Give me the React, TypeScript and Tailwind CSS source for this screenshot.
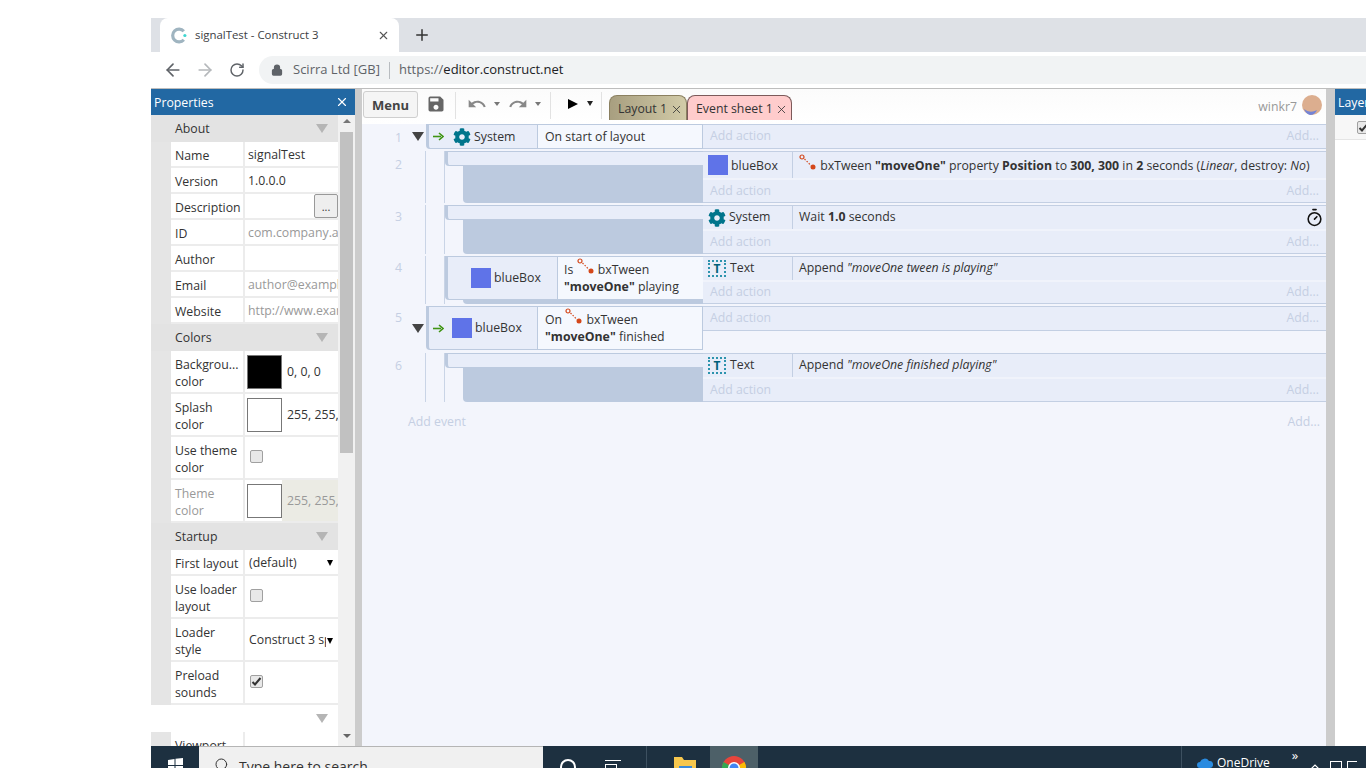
import { ReactNode } from 'react';
import { ArrowLeft, ArrowRight, Lock, RotateCw, Plus, X, Timer, Search } from 'lucide-react';
import { FaCog } from 'react-icons/fa';
import { MdSave, MdUndo, MdRedo } from 'react-icons/md';

const font = "font-['Open_Sans','Noto_Sans',sans-serif]";

function Check({ checked }: { checked?: boolean }) {
  return (
    <span className="w-[13px] h-[13px] rounded-[2px] border border-[#a0a0a0] bg-[#e8e8e8] flex items-center justify-center">
      {checked && (
        <svg width="11" height="11" viewBox="0 0 11 11">
          <path d="M1.5 6 L4 8.5 L9.5 2" fill="none" stroke="#333" strokeWidth="2" />
        </svg>
      )}
    </span>
  );
}

function Section({ label, blank }: { label?: string; blank?: boolean }) {
  return (
    <div className={`flex items-center justify-between h-[27px] pl-[24px] pr-[8px] text-[12.3px] text-[#333] ${blank ? 'bg-white' : 'bg-[#e3e3e3]'}`}>
      <span className="pt-[2px]">{label}</span>
      <span className="w-0 h-0 border-l-[6px] border-r-[6px] border-t-[9px] border-l-transparent border-r-transparent border-t-[#b5b5b5] mr-[2px]" />
    </div>
  );
}

function Row({ label, children, tall, muted, shaded }: { label: ReactNode; children?: ReactNode; tall?: boolean; muted?: boolean; shaded?: boolean }) {
  return (
    <div className={`flex bg-[#e5e5e5] ${tall ? 'h-[43px]' : 'h-[26px]'}`}>
      <div className="w-[20px] shrink-0" />
      <div className={`w-[74px] shrink-0 bg-white border-b-2 border-r-2 border-[#ececec] pl-[4px] pt-[2px] text-[12.3px] leading-[17px] flex items-center ${muted ? 'text-[#999]' : 'text-[#333]'}`}>
        <span>{label}</span>
      </div>
      <div className={`flex-1 min-w-0 overflow-hidden whitespace-nowrap bg-white border-b-2 border-[#ececec] flex items-center text-[12.3px] ${shaded ? 'text-[#999]' : 'text-[#333]'}`}>
        {children}
      </div>
    </div>
  );
}

function Value({ children }: { children: ReactNode }) {
  return <span className="pl-[3px] pt-[2px]">{children}</span>;
}

function Swatch({ color, value, shaded }: { color: string; value: string; shaded?: boolean }) {
  return (
    <div className="flex items-center h-full w-full">
      <span className={`w-[35px] h-[34px] ml-[2px] border border-[#777] shrink-0 ${color}`} />
      <span className={`flex items-center h-full flex-1 pl-[5px] pt-[2px] ${shaded ? 'bg-[#ebebe4]' : ''}`}>{value}</span>
    </div>
  );
}

function Select({ value }: { value: string }) {
  return (
    <div className="flex items-center justify-between w-full pl-[4px] pr-[5px] pt-[2px]">
      <span className="overflow-hidden">{value}</span>
      <span className="w-0 h-0 ml-[1px] border-l-[3px] border-r-[3px] border-t-[6px] border-l-transparent border-r-transparent border-t-black shrink-0" />
    </div>
  );
}

function CheckCell({ checked }: { checked?: boolean }) {
  return <span className="pl-[5px] -mt-[2px] flex"><Check checked={checked} /></span>;
}

function PropertiesPanel() {
  return (
    <div className="w-[204px] shrink-0 flex flex-col overflow-hidden bg-white">
      <div className="h-[26px] bg-[#2268a3] text-white text-[12.3px] flex items-center justify-between pl-[3px] pr-[6px] shrink-0">
        <span className="pt-[2px]">Properties</span>
        <X size={14} strokeWidth={2} />
      </div>
      <div className="flex flex-1 min-h-0">
        <div className="w-[187px] shrink-0">
          <div className="bg-[#e5e5e5]"><Section label="About" /></div>
          <Row label="Name"><Value>signalTest</Value></Row>
          <Row label="Version"><Value>1.0.0.0</Value></Row>
          <Row label="Description">
            <div className="flex justify-end w-full">
              <span className="w-[24px] h-[24px] border border-[#999] rounded-[2px] bg-[#eeeeee] flex items-center justify-center text-[11px] leading-none">...</span>
            </div>
          </Row>
          <Row label="ID" shaded><Value>com.company.app</Value></Row>
          <Row label="Author" />
          <Row label="Email" shaded><Value>author@example.com</Value></Row>
          <Row label="Website" shaded><Value>http://www.example.com</Value></Row>
          <div className="bg-[#e5e5e5]"><Section label="Colors" /></div>
          <Row tall label={<>Backgrou...<br />color</>}><Swatch color="bg-black" value="0, 0, 0" /></Row>
          <Row tall label={<>Splash<br />color</>}><Swatch color="bg-white" value="255, 255, 255" /></Row>
          <Row tall label={<>Use theme<br />color</>}><CheckCell /></Row>
          <Row tall muted shaded label={<>Theme<br />color</>}><Swatch shaded color="bg-white" value="255, 255, 255" /></Row>
          <div className="bg-[#e5e5e5]"><Section label="Startup" /></div>
          <Row label="First layout"><Select value="(default)" /></Row>
          <Row tall label={<>Use loader<br />layout</>}><CheckCell /></Row>
          <Row tall label={<>Loader<br />style</>}><Select value="Construct 3 spinner" /></Row>
          <Row tall label={<>Preload<br />sounds</>}><CheckCell checked /></Row>
          <Section blank />
          <Row label="Viewport" />
        </div>
        <div className="w-[17px] bg-[#f1f1f1] flex flex-col items-center">
          <span className="mt-[4px] w-0 h-0 border-l-[4px] border-r-[4px] border-b-[4px] border-l-transparent border-r-transparent border-b-[#777]" />
          <span className="mt-[9px] w-[13px] h-[321px] bg-[#c1c1c1]" />
          <span className="mt-[281px] w-0 h-0 border-l-[4px] border-r-[4px] border-t-[4px] border-l-transparent border-r-transparent border-t-[#666]" />
        </div>
      </div>
    </div>
  );
}

function TweenIcon() {
  return (
    <svg width="18" height="16" viewBox="0 0 18 16" className="inline-block align-baseline -mt-[4px]">
      <circle cx="3" cy="3" r="2" fill="none" stroke="#d4471a" strokeWidth="1.2" />
      <path d="M5.5 5 L12 11.5" stroke="#d4471a" strokeWidth="1.2" strokeDasharray="1.5 1.5" />
      <circle cx="14" cy="13" r="2.5" fill="#d4471a" />
    </svg>
  );
}

function Blue() {
  return <span className="w-[20px] h-[20px] bg-[#5f73e8] shrink-0" />;
}

function Gear({ size = 18 }: { size?: number }) {
  return <FaCog size={size} color="#00758c" className="shrink-0" />;
}

function TextIcon() {
  return (
    <span className="w-[18px] h-[17px] border-2 border-dotted border-[#2c93ad] flex items-center justify-center shrink-0 mr-[1px]">
      <span className="text-[#00617a] font-bold text-[12px] leading-none">T</span>
    </span>
  );
}

function GreenArrow() {
  return (
    <svg width="11" height="9" viewBox="0 0 11 9" className="shrink-0">
      <path d="M0 4.5 H8" stroke="#3f9413" strokeWidth="1.6" />
      <path d="M6 1 L10 4.5 L6 8" fill="none" stroke="#3f9413" strokeWidth="1.6" />
    </svg>
  );
}

function Action({ icon, name, children, extra, tall }: { icon: ReactNode; name: string; children: ReactNode; extra?: ReactNode; tall?: boolean }) {
  return (
    <div className={`flex items-center shrink-0 border-b-2 border-[#f0f3fb] ${tall ? 'h-[28px]' : 'h-[25px]'}`}>
      <div className="w-[90px] h-full shrink-0 flex items-center gap-[3px] pl-[5px] border-r border-[#c3cfe3] text-[#333]">
        {icon}
        <span className={tall ? 'pt-[3px]' : ''}>{name}</span>
      </div>
      <div className={`flex-1 pl-[6px] whitespace-nowrap text-[#333] ${tall ? 'pt-[3px]' : ''}`}>{children}</div>
      {extra}
    </div>
  );
}

function AddAction() {
  return (
    <div className="flex items-center justify-between flex-1 px-[7px] text-[#c5cfe3]">
      <span>Add action</span>
      <span>Add...</span>
    </div>
  );
}

function ActionsColumn({ children, h }: { children?: ReactNode; h?: string }) {
  return (
    <div className={`w-[623px] shrink-0 flex flex-col bg-[#e8edf9] border-y border-[#c3cfe3] ${h ?? 'h-full'}`}>
      {children}
    </div>
  );
}

function EventNumber({ n, toggle, top, toggleTop }: { n: number; toggle?: boolean; top: string; toggleTop?: string }) {
  return (
    <div className="w-[64px] shrink-0 h-full relative text-[#c5cfe3]">
      <span className={`absolute left-[33px] ${top}`}>{n}</span>
      {toggle && (
        <span className={`absolute left-[50px] w-0 h-0 border-l-[6px] border-r-[6px] border-t-[9px] border-l-transparent border-r-transparent border-t-[#444] ${toggleTop}`} />
      )}
    </div>
  );
}

function TopEvent({ n, h, top, toggleTop, object, children, actionsH, actions }: { n: number; h: string; top: string; toggleTop: string; object: ReactNode; children: ReactNode; actionsH?: string; actions: ReactNode }) {
  return (
    <div className={`flex ${h}`}>
      <EventNumber n={n} toggle top={top} toggleTop={toggleTop} />
      <div className="w-[277px] shrink-0 h-full flex bg-[#e8edf9] border border-l-[3px] border-[#bccadf] rounded-bl-[4px]">
        <div className="w-[109px] shrink-0 flex items-center border-r border-[#bccadf] text-[#333]">
          <span className="ml-[4px] mr-[9px] flex"><GreenArrow /></span>
          {object}
        </div>
        <div className="flex-1 bg-[#f5f8fe] pl-[7px] flex items-center leading-[17px] text-[#333]">{children}</div>
      </div>
      <ActionsColumn h={actionsH}>{actions}</ActionsColumn>
    </div>
  );
}

function SubEvent({ n, h, top, actions, condition }: { n: number; h: string; top: string; actions: ReactNode; condition?: ReactNode }) {
  return (
    <div className={`flex ${h}`}>
      <EventNumber n={n} top={top} />
      <div className="w-[277px] shrink-0 h-full flex">
        <div className="w-[19px] -ml-px shrink-0 border-l border-[#c9d4e6]" />
        <div className="flex-1 flex flex-col border-l border-[#c9d4e6]">
          {condition ?? (
            <div className="h-[15px] shrink-0 bg-[#e8edf9] border border-r-0 border-l-[3px] border-[#bccadf] rounded-bl-[4px]" />
          )}
          <div className="flex-1 ml-[18px] bg-[#bccadf] rounded-bl-[4px]" />
        </div>
      </div>
      <ActionsColumn>{actions}</ActionsColumn>
    </div>
  );
}

function Toolbar() {
  return (
    <div className="h-[35px] shrink-0 flex items-start bg-gradient-to-b from-[#fbfbfb] to-white text-[#555]">
      <button className="ml-[1px] mt-[2px] pt-[2px] w-[55px] h-[27px] border border-[#cfcfcf] rounded-[3px] font-bold text-[13px] text-[#444] bg-[#f5f5f5]">Menu</button>
      <span className="ml-[8px] mt-[5px]"><MdSave size={20} color="#666" /></span>
      <span className="ml-[9px] mt-[3px] w-px h-[27px] bg-[#e2e2e2]" />
      <span className="ml-[11px] mt-[5px]"><MdUndo size={20} color="#888" /></span>
      <span className="ml-[7px] mt-[13px] w-0 h-0 border-l-[3px] border-r-[3px] border-t-[4px] border-l-transparent border-r-transparent border-t-[#777]" />
      <span className="ml-[8px] mt-[5px]"><MdRedo size={20} color="#888" /></span>
      <span className="ml-[7px] mt-[13px] w-0 h-0 border-l-[3px] border-r-[3px] border-t-[4px] border-l-transparent border-r-transparent border-t-[#777]" />
      <span className="ml-[9px] mt-[3px] w-px h-[27px] bg-[#e2e2e2]" />
      <span className="ml-[17px] mt-[10px] w-0 h-0 border-t-[5px] border-b-[5px] border-l-[10px] border-t-transparent border-b-transparent border-l-black" />
      <span className="ml-[9px] mt-[12px] w-0 h-0 border-l-[3px] border-r-[3px] border-t-[5px] border-l-transparent border-r-transparent border-t-[#222]" />
      <span className="ml-[8px] mt-[3px] w-px h-[27px] bg-[#e2e2e2]" />
      <div className="ml-[7px] mt-[6px] w-[78px] h-[25px] flex items-center justify-between pl-[8px] pr-[3px] rounded-t-[8px] border border-b-0 border-[#8b8060] bg-gradient-to-r from-[#a89f80] to-[#d2cba8] text-[12.3px] text-[#333]">
        <span className="pt-[2px]">Layout 1</span>
        <X size={13} strokeWidth={1.5} className="mt-[2px]" />
      </div>
      <div className="mt-[6px] w-[105px] h-[25px] flex items-center justify-between pl-[8px] pr-[3px] rounded-t-[8px] border border-b-0 border-[#7c5a5a] bg-[#ffcccc] text-[12.3px] text-[#333]">
        <span className="pt-[2px]">Event sheet 1</span>
        <X size={13} strokeWidth={1.5} className="mt-[2px]" />
      </div>
      <div className="ml-auto mr-[4px] mt-[5px] flex items-center gap-[5px] text-[12.3px] text-[#999]">
        <span className="pt-[4px]">winkr7</span>
        <svg width="20" height="20" viewBox="0 0 20 20">
          <circle cx="10" cy="10" r="10" fill="#dcae8f" />
          <path d="M2 14 Q8 19 15 15 Q13 20 8 20 Q4 19 2 14" fill="#7484d6" />
        </svg>
      </div>
    </div>
  );
}

function EventSheet() {
  return (
    <div className="w-[964px] shrink-0 flex flex-col bg-[#f3f5fc] text-[12.3px] overflow-hidden">
      <Toolbar />
      <div className="flex flex-col gap-[2px] flex-1">
        <TopEvent
          n={1}
          h="h-[25px]"
          top="top-[5px]"
          toggleTop="top-[8px]"
          object={<span className="flex items-center gap-[3px]"><Gear /><span className="pt-[1px]">System</span></span>}
          actions={<AddAction />}
        >
          On start of layout
        </TopEvent>
        <SubEvent
          n={2}
          h="h-[52px]"
          top="top-[5px]"
          actions={
            <>
              <Action tall icon={<Blue />} name="blueBox">
                <TweenIcon /> bxTween <b>"moveOne"</b> property <b>Position</b> to <b>300, 300</b> in <b>2</b> seconds (<i>Linear</i>, destroy: <i>No</i>)
              </Action>
              <AddAction />
            </>
          }
        />
        <SubEvent
          n={3}
          h="h-[49px]"
          top="top-[3px]"
          actions={
            <>
              <Action icon={<Gear />} name="System" extra={<Timer size={19} strokeWidth={2} color="#111" className="mr-[2px]" />}>
                Wait <b>1.0</b> seconds
              </Action>
              <AddAction />
            </>
          }
        />
        <SubEvent
          n={4}
          h="h-[48px]"
          top="top-[3px]"
          condition={
            <div className="h-[44px] shrink-0 flex bg-[#e8edf9] border border-r-0 border-l-[3px] border-[#bccadf] rounded-bl-[4px]">
              <div className="w-[110px] shrink-0 flex items-center gap-[3px] pl-[23px] border-r border-[#bccadf] text-[#333]">
                <Blue />
                <span>blueBox</span>
              </div>
              <div className="flex-1 bg-[#f5f8fe] pl-[6px] flex items-center leading-[17px] text-[#333]">
                <span>Is <TweenIcon /> bxTween<br /><b>"moveOne"</b> playing</span>
              </div>
            </div>
          }
          actions={
            <>
              <Action icon={<TextIcon />} name="Text">Append <i>"moveOne tween is playing"</i></Action>
              <AddAction />
            </>
          }
        />
        <TopEvent
          n={5}
          h="h-[44px]"
          top="top-[3px]"
          toggleTop="top-[18px]"
          actionsH="h-[25px]"
          object={<span className="flex items-center gap-[3px] -ml-[1px]"><Blue /><span>blueBox</span></span>}
          actions={<AddAction />}
        >
          <span>On <TweenIcon /> bxTween<br /><b>"moveOne"</b> finished</span>
        </TopEvent>
        <div className="mt-[1px]">
          <SubEvent
            n={6}
            h="h-[49px]"
            top="top-[4px]"
            actions={
              <>
                <Action icon={<TextIcon />} name="Text">Append <i>"moveOne finished playing"</i></Action>
                <AddAction />
              </>
            }
          />
        </div>
        <div className="flex justify-between mt-[9px] pl-[46px] pr-[6px] text-[#c5cfe3]">
          <span>Add event</span>
          <span>Add...</span>
        </div>
      </div>
    </div>
  );
}

function LayersPanel() {
  return (
    <div className="flex-1 bg-white overflow-hidden whitespace-nowrap">
      <div className="h-[26px] bg-[#2268a3] text-white text-[12.3px] flex items-center pl-[3px]"><span className="pt-[2px]">Layers</span></div>
      <div className="h-[25px] border-b border-[#e5e5e5] bg-[#f7f7f7] flex items-center pl-[22px]"><Check checked /></div>
    </div>
  );
}

function ChromeLogo() {
  return (
    <svg width="24" height="24" viewBox="0 0 24 24">
      <circle cx="12" cy="12" r="12" fill="#e8453c" />
      <path d="M12 12 L1.6 6 A12 12 0 0 0 12 24 Z" fill="#34a853" />
      <path d="M12 12 L12 24 A12 12 0 0 0 22.4 6 Z" fill="#fbbc05" />
      <circle cx="12" cy="12" r="6" fill="white" />
      <circle cx="12" cy="12" r="4.5" fill="#4285f4" />
    </svg>
  );
}

function Taskbar() {
  return (
    <div className="h-[40px] shrink-0 flex bg-[#1d3040] text-white text-[12px]">
      <div className="w-[48px] shrink-0 flex justify-center pt-[12px]">
        <svg width="15" height="15" viewBox="0 0 15 15" fill="white">
          <path d="M0 2 L6.5 1 V7 H0 Z M7.5 .8 L15 0 V7 H7.5 Z M0 8 H6.5 V14 L0 13 Z M7.5 8 H15 V15 L7.5 14 Z" />
        </svg>
      </div>
      <div className="w-[344px] shrink-0 bg-[#f0f0f0] border-t border-[#b5b5b5] flex items-start pl-[15px] pt-[9px] gap-[9px] text-[#333] text-[14px]">
        <Search size={16} strokeWidth={1.5} className="mt-[1px]" />
        <span>Type here to search</span>
      </div>
      <div className="ml-[17px] mt-[13px] w-[16px] h-[16px] rounded-full border-2 border-white shrink-0" />
      <div className="ml-[29px] mt-[14px] flex flex-col gap-[1px] shrink-0">
        <span className="w-[16px] h-[3px] border-t border-white" />
        <span className="w-[12px] h-[8px] border border-white" />
      </div>
      <div className="ml-[25px] w-px h-full bg-[#3d5060] shrink-0" />
      <div className="ml-[27px] mt-[11px] shrink-0">
        <svg width="22" height="18" viewBox="0 0 22 18">
          <path d="M0 0 H8 L10 3 H22 V18 H0 Z" fill="#f7c74d" />
          <rect x="5" y="9" width="13" height="4" fill="#3b8ad9" />
        </svg>
      </div>
      <div className="ml-[14px] w-[48px] h-full bg-[#4d6068] flex justify-center pt-[10px] shrink-0">
        <ChromeLogo />
      </div>
      <div className="ml-[423px] w-px h-full bg-[#3d5060] shrink-0" />
      <div className="ml-[15px] flex items-start pt-[8px] gap-[4px] shrink-0">
        <svg width="16" height="11" viewBox="0 0 16 11" className="mt-[3px]">
          <path d="M3 11 A3 3 0 0 1 3 5 A5 5 0 0 1 12 4 A3.5 3.5 0 0 1 13 11 Z" fill="#2a8be0" />
        </svg>
        <span>OneDrive</span>
      </div>
      <span className="ml-[22px] mt-[3px] text-[13px] leading-none shrink-0">»</span>
      <svg width="12" height="8" viewBox="0 0 12 8" className="ml-[11px] mt-[17px] shrink-0">
        <path d="M1 7 L6 2 L11 7" fill="none" stroke="white" strokeWidth="1.2" />
      </svg>
      <span className="ml-[9px] mt-[15px] w-[12px] h-[10px] border border-white shrink-0" />
      <span className="ml-[5px] mt-[15px] w-[10px] h-[10px] border-l border-t border-white shrink-0" />
    </div>
  );
}

export default function App() {
  return (
    <div className={`w-[1366px] h-[768px] overflow-hidden bg-white pl-[151px] pt-[18px] flex flex-col ${font}`}>
      <div className="h-[34px] shrink-0 bg-[#dee1e6] flex items-stretch pl-[9px] text-[#3c4043]">
        <div className="w-[239px] bg-white rounded-t-[8px] flex items-center text-[11.4px]">
          <svg width="17" height="17" viewBox="0 0 16 16" className="ml-[10px] mr-[8px]">
            <path d="M13 4 A6 6 0 1 0 13 12" fill="none" stroke="#9fb4c0" strokeWidth="3" />
            <circle cx="14" cy="8" r="1.5" fill="#3fd6d0" />
          </svg>
          <span>signalTest - Construct 3</span>
          <X size={13} strokeWidth={2} className="ml-auto mr-[9px]" color="#555" />
        </div>
        <div className="ml-[14px] flex items-center"><Plus size={18} strokeWidth={2} color="#333" /></div>
      </div>
      <div className="h-[37px] shrink-0 flex items-center bg-white border-b border-[#bdbdbd] text-[13px]">
        <ArrowLeft size={20} strokeWidth={2} color="#5f6368" className="ml-[12px]" />
        <ArrowRight size={20} strokeWidth={2} color="#b5b8bb" className="ml-[12px]" />
        <RotateCw size={16} strokeWidth={2.2} color="#5f6368" className="ml-[14px]" />
        <div className="ml-[14px] flex-1 h-[28px] rounded-l-full bg-[#f1f3f4] flex items-center pl-[12px]">
          <Lock size={12} strokeWidth={2.5} color="#5f6368" fill="#5f6368" />
          <span className="ml-[10px] text-[#5f6368]">Scirra Ltd [GB]</span>
          <span className="mx-[9px] w-px h-[17px] bg-[#b8bcc0]" />
          <span className="text-[#5f6368]">https://<span className="text-[#202124]">editor.construct.net</span></span>
        </div>
      </div>
      <div className="h-[657px] shrink-0 flex overflow-hidden">
        <PropertiesPanel />
        <div className="w-[7px] shrink-0 bg-[#cccccc]" />
        <EventSheet />
        <div className="w-[9px] shrink-0 bg-[#cccccc]" />
        <LayersPanel />
      </div>
      <Taskbar />
    </div>
  );
}
